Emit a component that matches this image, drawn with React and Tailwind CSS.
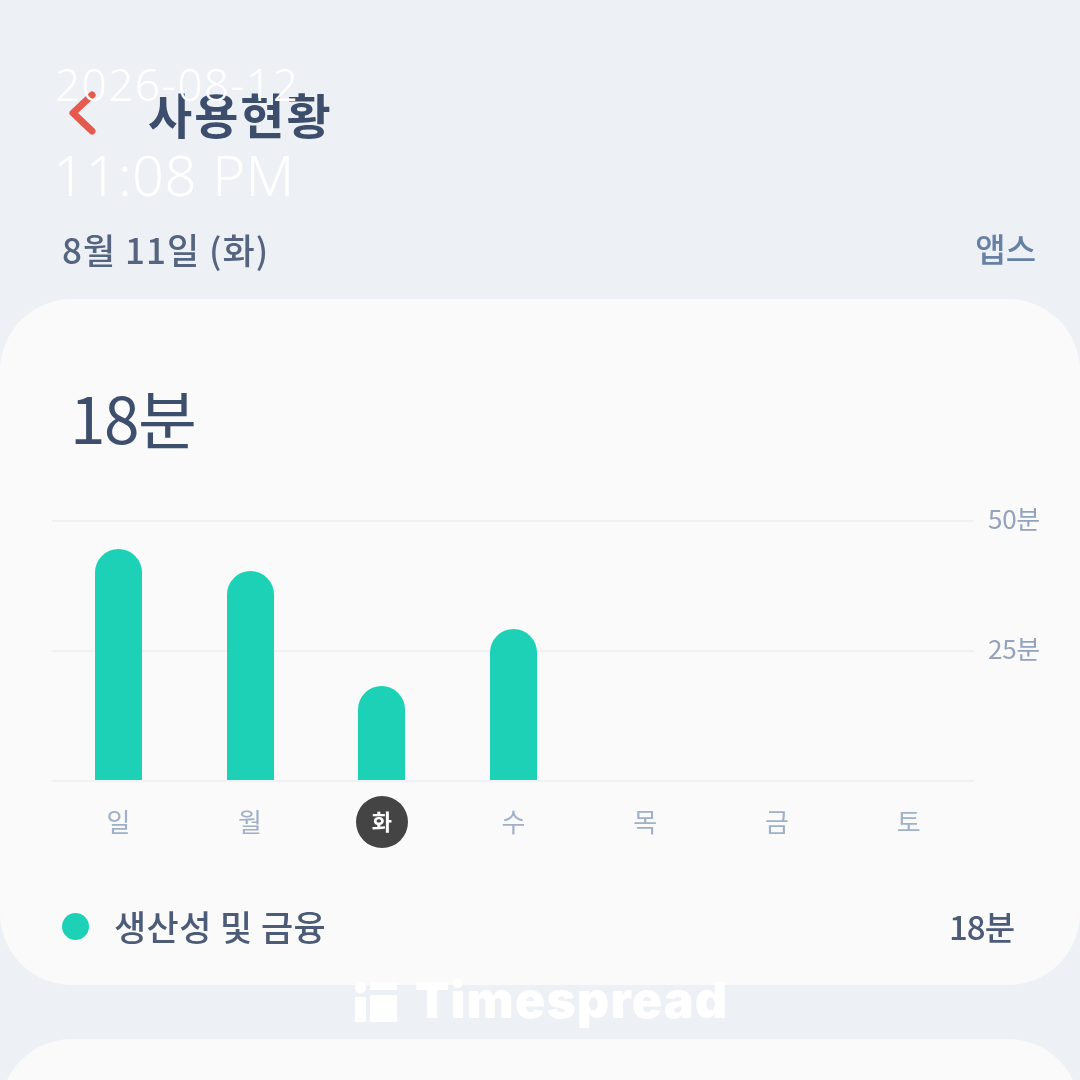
import React from 'react'

const days = [
  { label: '일', barHeight: 'h-[231px]' },
  { label: '월', barHeight: 'h-[209px]' },
  { label: '화', barHeight: 'h-[94px]', active: true },
  { label: '수', barHeight: 'h-[151px]' },
  { label: '목' },
  { label: '금' },
  { label: '토' },
]

function Timestamp() {
  return (
    <div className="absolute left-[55px] top-[54px] text-white font-['Noto_Sans',sans-serif] font-light pointer-events-none">
      <div className="text-[44px] leading-[60px] tracking-[1.5px]">2026-08-12</div>
      <div className="text-[56px] leading-[80px] mt-[20px] -ml-[2px] tracking-[0.5px]">11:08 PM</div>
    </div>
  )
}

function Watermark() {
  return (
    <div className="absolute left-[355px] top-[981px] flex items-center gap-[18px] text-white pointer-events-none">
      <svg width="42" height="42" viewBox="0 0 42 42" fill="currentColor">
        <circle cx="5.5" cy="7" r="5.5" />
        <rect x="0" y="16" width="11" height="25" />
        <rect x="15" y="1" width="27" height="8" />
        <rect x="15" y="14" width="27" height="27" />
      </svg>
      <span className="font-['Inter',sans-serif] font-black text-[50px] leading-[44px] tracking-[1.2px] mt-[-4px]">Timespread</span>
    </div>
  )
}

function Chart() {
  return (
    <div className="mt-[60px] ml-[52px] mr-[40px]">
      <div className="flex items-center h-0 mt-px">
        <div className="w-[922px] h-[2px] bg-[#f0f1f4]" />
        <span className="ml-[14px] mb-[8px] text-[26px] text-[#94a3bd] whitespace-nowrap tracking-[-0.3px]">50분</span>
      </div>
      <div className="h-[129px]" />
      <div className="flex items-center h-0 mt-px">
        <div className="w-[922px] h-[2px] bg-[#f0f1f4]" />
        <span className="ml-[14px] mb-[8px] text-[26px] text-[#94a3bd] whitespace-nowrap tracking-[-0.3px]">25분</span>
      </div>
      <div className="w-[922px] h-[129px]" />
      <div className="w-[922px] grid grid-cols-7 items-end h-0 border-b-2 border-[#f0f1f4] box-content">
        {days.map((d) => (
          <div key={d.label} className="flex justify-center h-0 items-end ml-px">
            {d.barHeight && <div className={`w-[47px] rounded-t-[24px] bg-[#1dd1b7] shrink-0 ${d.barHeight}`} />}
          </div>
        ))}
      </div>
      <div className="w-[922px] grid grid-cols-7 mt-[14px]">
        {days.map((d) => (
          <div key={d.label} className="flex justify-center ml-px">
            <div className={`w-[52px] h-[52px] rounded-full flex items-center justify-center ${d.active ? 'bg-[#444444] text-white text-[22px] font-bold pb-[3px]' : 'text-[#9fb0c9] text-[26px] pb-[3px]'}`}>
              {d.label}
            </div>
          </div>
        ))}
      </div>
    </div>
  )
}

export default function App() {
  return (
    <div className="relative w-[1080px] h-[1080px] overflow-hidden bg-[#edf0f5] font-['Noto_Sans_CJK_KR','Noto_Sans',sans-serif]">
      <div className="blur-[0.7px]">
        <header className="h-[299px] pt-[80px]">
          <div className="flex items-center h-[66px] pl-[68px]">
            <svg width="30" height="44" viewBox="0 0 30 44" fill="none">
              <path d="M24 4 L5 22 L24 40" stroke="#e5594f" strokeWidth="7" strokeLinecap="round" strokeLinejoin="round" />
            </svg>
            <h1 className="ml-[50px] text-[48px] leading-[66px] font-bold text-[#3d4e6c] tracking-[2px] whitespace-nowrap">사용현황</h1>
          </div>
          <div className="flex justify-between items-center h-[50px] pl-[62px] pr-[44px] mt-[78px]">
            <span className="text-[35px] font-medium text-[#55657f] tracking-[1px] whitespace-nowrap">8월 11일 (화)</span>
            <span className="text-[33px] font-medium text-[#6680a6] whitespace-nowrap">앱스</span>
          </div>
        </header>

        <section className="h-[686px] rounded-[72px] bg-[#fafafa]">
          <div className="pt-[72px] pl-[70px] text-[#3e4f6e] text-[64px] leading-[90px] tracking-[-1.5px]">18분</div>
          <Chart />
          <div className="flex items-center justify-between pl-[62px] pr-[66px] mt-[52px]">
            <div className="flex items-center gap-[25px]">
              <span className="w-[27px] h-[27px] rounded-full bg-[#1dd1b7]" />
              <span className="text-[35px] font-medium text-[#4c5c78] tracking-[0.4px] whitespace-nowrap">생산성 및 금융</span>
            </div>
            <span className="text-[33px] font-medium text-[#4c5c78] tracking-[-1px] whitespace-nowrap">18분</span>
          </div>
        </section>

        <section className="mt-[54px] h-[200px] rounded-[72px] bg-[#fafafa]" />

        <Watermark />
      </div>

      <Timestamp />
    </div>
  )
}
